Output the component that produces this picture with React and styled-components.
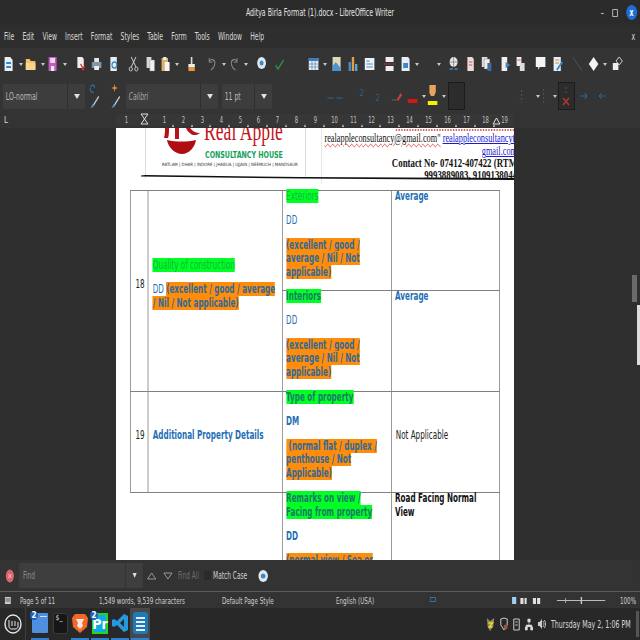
import React from "react";
import styled, { createGlobalStyle, css } from "styled-components";

const GlobalStyle = createGlobalStyle`
  html, body { margin: 0; padding: 0; background: #2e2e2e; }
  * { box-sizing: border-box; }
`;

const UI = `"DejaVu Sans Condensed", "DejaVu Sans", sans-serif`;

// the screenshot was squeezed sideways, so text rows are laid out wide and narrowed
const SQUEEZE = 0.68;
const wide = (px) => px / SQUEEZE;

const squeezed = css`
  transform: scaleX(${SQUEEZE});
  transform-origin: left top;
`;

const squeezedRow = css`
  width: ${wide(640)}px;
  ${squeezed}
`;

const Window = styled.div`
  width: 640px;
  height: 640px;
  display: flex;
  flex-direction: column;
  overflow: hidden;
  font-family: ${UI};
  color: #d6d6d6;
  background: #2e2e2e;
`;

const TitleBar = styled.div`
  ${squeezedRow}
  height: 25px;
  flex: none;
  display: grid;
  grid-template-columns: 1fr auto 1fr;
  align-items: center;
  background: #2b2b2b;
  font-size: 10.2px;
  color: #e4e4e4;
`;

const TitleText = styled.span`
  grid-column: 2;
`;

const WindowButtons = styled.div`
  grid-column: 3;
  display: flex;
  justify-content: flex-end;
  align-items: center;
  gap: ${wide(8)}px;
  padding-right: ${wide(3)}px;
`;

const CloseDot = styled.div`
  width: ${wide(11)}px;
  height: 15px;
  border-radius: 50%;
  background: #1b6fd6;
  color: #fff;
  font-size: 10px;
  font-weight: 700;
  display: flex;
  align-items: center;
  justify-content: center;
`;

const MenuBar = styled.div`
  ${squeezedRow}
  height: 23px;
  flex: none;
  display: flex;
  align-items: center;
  gap: ${wide(8.2)}px;
  padding: 0 ${wide(5)}px 0 ${wide(4)}px;
  background: #2e2e2e;
  font-size: 10px;
  color: #d9d9d9;
`;

const MenuClose = styled.span`
  margin-left: auto;
  color: #ddd;
`;

const Bar = styled.div`
  height: 32px;
  display: flex;
  align-items: center;
  background: #343434;
  flex: none;
`;

const Tool = styled.div`
  flex: none;
  width: ${(p) => p.$w}px;
  margin-left: ${(p) => p.$ml}px;
  display: flex;
  align-items: center;
  justify-content: center;
`;

const Arrow = styled.div`
  width: 0;
  height: 0;
  border-left: 2px solid transparent;
  border-right: 2px solid transparent;
  border-top: 3px solid #c9c9c9;
`;

const Combo = styled.div`
  flex: none;
  width: ${(p) => p.$w}px;
  height: 25px;
  margin-left: ${(p) => p.$ml}px;
  display: flex;
  align-items: center;
  background: #3d3d3d;
  border-radius: 2px;
  font-size: 10px;
  color: ${(p) => p.$color || "#bcbcbc"};
  font-style: ${(p) => (p.$italic ? "italic" : "normal")};
`;

const ComboText = styled.span`
  flex: 1;
  padding-left: 4px;
  white-space: nowrap;
  ${squeezed}
`;

const ComboButton = styled.div`
  width: 18px;
  height: 100%;
  border-left: 1px solid #2f2f2f;
  display: flex;
  align-items: center;
  justify-content: center;
`;

const BigArrow = styled(Arrow)`
  border-left-width: 3px;
  border-right-width: 3px;
  border-top-width: 5px;
  border-top-color: #e0e0e0;
`;

const DarkBox = styled.div`
  flex: none;
  width: ${(p) => p.$w}px;
  height: 28px;
  margin-left: ${(p) => p.$ml}px;
  background: #2c2c2c;
  border: 1px solid #1c1c1c;
  display: flex;
  align-items: center;
  justify-content: center;
`;

const RulerBar = styled.div`
  height: 16px;
  flex: none;
  display: flex;
  align-items: center;
  background: #333;
`;

const TabCorner = styled.span`
  width: 116px;
  padding-left: 4px;
  font-size: 8px;
  color: #ddd;
`;

const Ruler = styled.div`
  position: relative;
  width: 398px;
  height: 12px;
  padding-left: 1px;
  display: flex;
  align-items: center;
  background: #373737;
  font-size: 8px;
  color: #c4c4c4;
`;

const RulerNum = styled.span`
  flex: none;
  width: 18.9px;
  text-align: center;
  position: relative;
  &::after {
    content: "";
    position: absolute;
    right: 0;
    bottom: -2px;
    border-left: 1.5px solid transparent;
    border-right: 1.5px solid transparent;
    border-bottom: 3px solid #ccc;
    display: ${(p) => (p.$tick ? "block" : "none")};
  }
`;

const RulerDigit = styled.span`
  display: inline-block;
  transform: scaleX(0.72);
`;

const RulerMark = styled.svg`
  position: absolute;
  top: -1px;
  left: ${(p) => p.$x}px;
`;

const DocArea = styled.div`
  flex: 1;
  min-height: 0;
  display: flex;
  padding-left: 116px;
  background: #2f2f2f;
`;

const Page = styled.div`
  position: relative;
  width: 398px;
  height: 100%;
  overflow: hidden;
  background: #fff;
`;

const PageHeader = styled.div`
  height: 62px;
  display: flex;
  overflow: hidden;
`;

const LogoCell = styled.div`
  flex: none;
  width: 161px;
  height: 50px;
  margin-left: 29px;
  padding-left: 16px;
  border-left: 1px solid #ddd;
  border-right: 1px solid #ddd;
`;

const LogoTop = styled.div`
  display: flex;
  height: 22px;
`;

const AppleMark = styled.svg`
  flex: none;
`;

const BrandName = styled.div`
  flex: none;
  font-family: "Liberation Serif", serif;
  font-size: 28px;
  line-height: 28px;
  color: #c0141c;
  margin-top: -11px;
  margin-left: 2px;
  transform: scaleX(0.63);
  transform-origin: left;
  white-space: nowrap;
`;

const BrandSub = styled.div`
  font-weight: 700;
  font-size: 9.4px;
  line-height: 10px;
  color: #12a25a;
  margin-left: 43px;
  white-space: nowrap;
  transform: scaleX(0.75);
  transform-origin: left;
`;

const BrandCities = styled.div`
  font-size: 4.4px;
  line-height: 7px;
  margin-top: 1px;
  color: #333;
  white-space: nowrap;
`;

const ContactCell = styled.div`
  flex: none;
  width: ${wide(196)}px;
  height: 56px;
  margin-left: 15px;
  padding-left: 4px;
  border-left: 1.5px solid #ddd;
  font-family: "Liberation Serif", serif;
  color: #111;
  text-align: right;
  ${squeezed}
`;

const Squiggle = styled.div`
  height: 3px;
  margin: 0 4px 0 105px;
  border-bottom: 2px dotted #d85a5a;
`;

const MailLine = styled.div`
  font-size: 12.2px;
  line-height: 13px;
  margin-top: 1px;
  white-space: nowrap;
  display: flex;
`;

const Typo = styled.span`
  text-decoration: underline wavy #d84040 1px;
`;

const DocLink = styled.a`
  color: #1a1ad0;
  text-decoration: underline;
`;

const LinkLine = styled.div`
  font-size: 12.2px;
  line-height: 12px;
`;

const ContactLine = styled.div`
  font-size: 13px;
  font-weight: 700;
  line-height: 12px;
  white-space: nowrap;
`;

const Swoosh = styled.svg`
  position: absolute;
  left: 25px;
  top: 46px;
`;

const Sheet = styled.table`
  margin-left: 14px;
  width: ${wide(369)}px;
  table-layout: fixed;
  border-collapse: collapse;
  font-size: 11.8px;
  line-height: 13.6px;
  ${squeezed}
`;

const LINE = "#6e6e6e";
const RULE = "#808080";

const Cell = styled.td`
  border-top: 1px solid ${RULE};
  border-bottom: ${(p) => (p.$open ? "none" : `1px solid ${RULE}`)};
  border-left: ${(p) => (p.$open ? "none" : `1.5px solid ${LINE}`)};
  border-right: ${(p) => (p.$open ? "none" : `1.5px solid ${LINE}`)};
  padding: ${(p) => (p.$mid ? "0 4px 13px 6px" : "0 4px 0 5px")};
  vertical-align: ${(p) => (p.$mid ? "middle" : "top")};
  height: ${(p) => p.$h || "auto"};
  color: ${(p) => p.$color || "#222"};
  font-weight: ${(p) => (p.$bold ? 700 : 400)};
  text-align: ${(p) => (p.$center ? "center" : "left")};
  & > p:first-child {
    margin-top: ${(p) => (p.$mid ? 0 : -1)}px;
  }
`;

const Para = styled.p`
  margin: 0 0 ${(p) => (p.$last ? 0 : 10.8)}px;
  color: ${(p) => p.$color || "#1f6fb5"};
  font-weight: ${(p) => (p.$bold ? 700 : 400)};
`;

const Green = styled.span`
  background: #00ff22;
  color: ${(p) => p.$color || "#0f7d5e"};
  font-weight: ${(p) => (p.$bold ? 700 : 400)};
`;

const Orange = styled.span`
  background: #ff8c0a;
  color: #2f6a9a;
  font-weight: 700;
`;

const Rail = styled.div`
  position: relative;
  margin-left: auto;
  width: 10px;
  height: 100%;
`;

const Thumb = styled.div`
  position: absolute;
  left: 2px;
  top: 147px;
  width: 5px;
  height: 27px;
  background: #6a6a6a;
`;

const Handle = styled.div`
  position: absolute;
  right: 0;
  top: 177px;
  width: 3px;
  height: 60px;
  background: #dcdcdc;
`;

const FindBar = styled.div`
  ${squeezedRow}
  height: 32px;
  flex: none;
  display: flex;
  align-items: center;
  background: #333;
  border-bottom: 1px solid #5c5c5c;
  font-size: 9.6px;
`;

const FindInput = styled.div`
  flex: none;
  width: ${wide(124)}px;
  height: 25px;
  margin-left: ${wide(2)}px;
  display: flex;
  align-items: center;
  background: #3e3e3e;
  color: #8c8c8c;
`;

const FindText = styled.span`
  flex: 1;
  padding-left: 6px;
`;

const FindDrop = styled(ComboButton)`
  width: ${wide(18)}px;
`;

const FindLabel = styled.span`
  margin-left: ${(p) => wide(p.$ml)}px;
  color: ${(p) => p.$color};
  white-space: nowrap;
`;

const Check = styled.div`
  flex: none;
  width: ${wide(7)}px;
  height: 9px;
  margin-left: ${wide(5)}px;
  background: #2a2a2a;
`;

const StatusBar = styled.div`
  ${squeezedRow}
  height: 16px;
  flex: none;
  display: flex;
  align-items: center;
  background: #333;
  font-size: 9.2px;
  color: #cfcfcf;
`;

const StatusItem = styled.span`
  flex: none;
  width: ${(p) => wide(p.$w)}px;
  margin-left: ${(p) => wide(p.$ml || 0)}px;
  white-space: nowrap;
`;

const Slider = styled.div`
  position: relative;
  flex: none;
  width: ${wide(48)}px;
  height: 1px;
  margin-left: ${wide(13)}px;
  background: #bbb;
  &::before, &::after {
    content: "";
    position: absolute;
    top: -3px;
    width: 1.5px;
    height: 7px;
    background: #ccc;
  }
  &::before { left: ${wide(8)}px; height: 5px; top: -2px; }
  &::after { left: ${wide(24)}px; }
`;

const Taskbar = styled.div`
  height: 32px;
  flex: none;
  display: flex;
  align-items: center;
  background: #282828;
  position: relative;
`;

const MintSlot = styled.div`
  width: 26px;
  height: 100%;
  display: flex;
  align-items: center;
  justify-content: center;
  border-right: 1px solid #3c3c3c;
`;

const AppList = styled.div`
  display: flex;
  height: 100%;
  margin-left: 4px;
`;

const AppSlot = styled.div`
  position: relative;
  width: 20px;
  height: 100%;
  display: flex;
  align-items: center;
  justify-content: center;
  background: ${(p) => (p.$active ? "#484848" : "transparent")};
  padding-bottom: 2px;
  &::after {
    content: "";
    position: absolute;
    left: 1px;
    right: 1px;
    bottom: 0;
    height: 2px;
    background: ${(p) => (p.$running ? "#2f7fd0" : "transparent")};
  }
`;

const Badge = styled.span`
  position: absolute;
  top: 3px;
  left: 0;
  width: 8px;
  height: 9px;
  border-radius: 50%;
  background: #1c5fc4;
  color: #fff;
  font-size: 8px;
  font-weight: 700;
  line-height: 9px;
  text-align: center;
  z-index: 1;
`;

const Folder = styled.div`
  width: 16px;
  height: 20px;
  background: #4f8fe0;
  border-radius: 1px;
  position: relative;
  &::before {
    content: "";
    position: absolute;
    left: 8px;
    top: 3px;
    width: 7px;
    height: 1px;
    background: #cfe1f8;
  }
`;

const Terminal = styled.div`
  width: 15px;
  height: 21px;
  border-radius: 3px;
  background: #161616;
  border: 1px solid #3a3a3a;
  color: #ddd;
  font-size: 7px;
  padding: 1px 0 0 2px;
  line-height: 7px;
`;

const Premiere = styled.div`
  width: 16px;
  height: 21px;
  background: #12a8e8;
  border: 2px solid #22d622;
  color: #fff;
  font-size: 14px;
  font-weight: 700;
  display: flex;
  align-items: flex-end;
  justify-content: center;
  line-height: 15px;
`;

const WriterTile = styled.div`
  width: 15px;
  height: 22px;
  border-radius: 3px;
  background: #1f78b8;
  padding: 5px 3px 0;
  display: flex;
  flex-direction: column;
  gap: 2px;
`;

const WriterLine = styled.i`
  display: block;
  height: 2px;
  background: #e4eef6;
`;

const Tray = styled.div`
  margin-left: auto;
  display: flex;
  align-items: center;
  gap: 5px;
  padding-right: 10px;
  font-size: 10.3px;
  color: #d8d8d8;
`;

const Clock = styled.span`
  margin-right: -38px;
  white-space: nowrap;
  ${squeezed}
`;

const Grip = styled.div`
  position: absolute;
  right: 1px;
  top: 3px;
  width: 3px;
  height: 26px;
  background: #555;
`;

// pictures are drawn on a 14 wide box and narrowed like everything else on the screenshot
const S = ({ w = 14, h = 16, children }) => (
  <svg width={w * 0.8} height={h} viewBox={`0 0 ${w} ${h}`} preserveAspectRatio="none">{children}</svg>
);

const icons = {
  doc: <S><path d="M2 1h7l3 3v11H2z" fill="#e9f1f8" /><path d="M4 6h6v2H4zM4 10h6v2H4z" fill="#2f86d0" /></S>,
  folder: <S><path d="M1 3h5l1 2h6v9H1z" fill="#f4c267" /><path d="M1 7h12v7H1z" fill="#f9d68a" /></S>,
  save: <S><path d="M2 1h10v14H2z" fill="#c45cc0" /><path d="M4 2h6v5H4z" fill="#f1d4ef" /><path d="M5 10h4v5H5z" fill="#eee" /></S>,
  pdf: <S><path d="M3 1h6l2 2v9H3z" fill="#eee" /><path d="M7 8l4 6M9 14l3-4" stroke="#d23030" strokeWidth="1.5" fill="none" /></S>,
  print: <S><path d="M4 2h6v4H4z" fill="#e6e6e6" /><path d="M1 6h12v6H1z" fill="#7f97aa" /><path d="M4 10h6v4H4z" fill="#eee" /></S>,
  preview: <S><path d="M3 1h8v14H3z" fill="#e8eef3" /><circle cx="8" cy="9" r="3" fill="none" stroke="#3a83bd" strokeWidth="1.4" /></S>,
  cut: <S><path d="M4 1l6 10M10 1L4 11" stroke="#d0d0d0" strokeWidth="1.1" /><circle cx="3.5" cy="13" r="2" fill="none" stroke="#d0d0d0" /><circle cx="10.5" cy="13" r="2" fill="none" stroke="#d0d0d0" /></S>,
  copy: <S><path d="M2 1h6v11H2z" fill="#d8d8d8" /><path d="M6 4h6v11H6z" fill="#f0f0f0" stroke="#777" strokeWidth=".4" /></S>,
  paste: <S><path d="M2 2h8v13H2z" fill="#d9b36c" /><path d="M6 6h6v9H6z" fill="#f5f5f5" /><path d="M4 1h4v3H4z" fill="#eee" /></S>,
  brush: <S><path d="M6 1h2v7H6z" fill="#ddd" /><path d="M3 8h8v3H3z" fill="#f0f0f0" /><path d="M3 11h8v4H3z" fill="#e59a3e" /></S>,
  undo: <S><path d="M4 5c3-3 8-1 7 3-.5 3-3 5-5 6M4 2v4h4" fill="none" stroke="#8d8d8d" strokeWidth="1.1" /></S>,
  redo: <S><path d="M10 5C7 2 2 4 3 8c.5 3 3 5 5 6M10 2v4H6" fill="none" stroke="#8d8d8d" strokeWidth="1.1" /></S>,
  nav: <S><ellipse cx="7" cy="7" rx="5.5" ry="6" fill="#dfe9f2" /><circle cx="7" cy="7" r="2.5" fill="#3d86c8" /></S>,
  tick: <S><path d="M2 9l3 4 7-9" fill="none" stroke="#2e8b45" strokeWidth="1.8" /></S>,
  table: <S><path d="M1 2h12v12H1z" fill="#e8eef4" /><path d="M1 2h12v3H1z" fill="#3a7fc0" /><path d="M1 8h12M1 11h12M5 2v12M9 2v12" stroke="#4b7ea8" strokeWidth=".7" /></S>,
  image: <S><path d="M2 1h10v14H2z" fill="#e4d8b4" /><path d="M2 10l4-4 6 6v3H2z" fill="#4a96d2" /></S>,
  chart: <S><path d="M2 6h3v9H2z" fill="#3f8fd0" /><path d="M6 1h3v14H6z" fill="#e3a040" /><path d="M10 8h3v7h-3z" fill="#5ea3d8" /></S>,
  text: <S><path d="M1 2h12v12H1z" fill="#eef2f5" /><path d="M3 5h4M3 8h8M3 11h8" stroke="#3a7fc0" /></S>,
  pagebreak: <S><path d="M2 1h10v5H2zM2 10h10v5H2z" fill="#eee" /><path d="M0 8h14" stroke="#b33" /></S>,
  field: <S><path d="M2 1h8l2 2v12H2z" fill="#e8eef4" /><path d="M4 7h6v5H4z" fill="#3d86c8" /></S>,
  link: <S><circle cx="7" cy="6" r="5" fill="#e6e6e6" /><path d="M2 6h10M7 1v10" stroke="#555" strokeWidth=".6" /><path d="M2 13h4M8 13h4" stroke="#3d86c8" strokeWidth="1.6" /></S>,
  note: <S><path d="M3 1h6l2 2v12H3z" fill="#efd8d8" /><path d="M5 6h4M5 9h4" stroke="#a55" /></S>,
  endnote: <S><path d="M1 1h7v10H1z" fill="#ddd" /><path d="M4 3h7v10H4z" fill="#eee" stroke="#666" strokeWidth=".4" /><path d="M8 7h5v8H8z" fill="#3d6f99" /></S>,
  bookmark: <S><path d="M2 1h7v14H2z" fill="#f0f0f0" /><path d="M7 6l6 3-6 3z" fill="#3d86c8" /></S>,
  xref: <S><path d="M2 1h6v9H2z" fill="#eee" /><path d="M6 7h6v8H6z" fill="#ddd" /><path d="M3 4h4" stroke="#c44" /></S>,
  comment: <S><path d="M1 1h12v10H6l-2 3v-3H1z" fill="#f4f4f4" /></S>,
  track: <S><path d="M2 1h9v14H2z" fill="#e8eef4" /><path d="M4 4h5M4 7h5" stroke="#c78a3a" /><path d="M6 14l7-8" stroke="#3d86c8" strokeWidth="2" /></S>,
  line: <S><path d="M1 1l12 14" stroke="#3f566a" strokeWidth="1.1" /></S>,
  shape: <S><path d="M7 1l6 7-6 7-6-7z" fill="#f4f4f4" /></S>,
  shapes: <S><path d="M9 1l4 4-4 4-4-4z" fill="none" stroke="#ddd" /><path d="M1 7h7v7H1z" fill="#eee" /></S>,
  paintA: <S w={16} h={26}><path d="M3 4c2-3 6-2 5 1M3 5c-1 3 1 5 4 4" fill="none" stroke="#2f6f9e" strokeWidth="1.4" /><path d="M4 25l2-3 7-9 1 1-7 9z" fill="#d8d8d8" /><path d="M3 25l3-4 2 2z" fill="#3a95d8" /></S>,
  paintB: <S w={16} h={26}><path d="M7 1l1 3 3 1-3 1-1 3-1-3-3-1 3-1z" fill="#d98a3a" /><path d="M4 25l2-3 7-9 1 1-7 9z" fill="#d8d8d8" /><path d="M3 25l3-4 2 2z" fill="#3a95d8" /></S>,
  dash: <S><path d="M3 10h8" stroke="#2f5f82" strokeWidth="1.2" /></S>,
  two: <S><text x="3" y="8" fontSize="9" fill="#2f5f82" fontFamily="DejaVu Sans">2</text></S>,
  twoLow: <S><text x="3" y="13" fontSize="9" fill="#2f5f82" fontFamily="DejaVu Sans">2</text></S>,
  pen: <S w={16}><path d="M1 12h6" stroke="#2f6f5a" strokeWidth="1.2" /><path d="M7 12l5-7 2 2-5 6z" fill="#d83a3a" /></S>,
  redBar: <S><path d="M1 11h12v4H1z" fill="#d01818" /></S>,
  marker: <S w={14} h={26}><path d="M3 2h8v7l-2 4H5l-2-3z" fill="#e8a45a" /><path d="M1 18h12v4H1z" fill="#f4f000" /></S>,
  dots: <S><path d="M7 2v2M7 6v2M7 10v2" stroke="#2f5f82" strokeWidth="1.4" /><path d="M2 14h10" stroke="#2f5f82" strokeDasharray="1 2" /></S>,
  bars: <S><path d="M7 1v14" stroke="#2f5f82" strokeDasharray="2 2" /></S>,
  right: <S><path d="M2 8h8M7 5l3 3-3 3" stroke="#2f6f9e" fill="none" /></S>,
  left: <S><path d="M12 8H4M7 5L4 8l3 3" stroke="#2f6f9e" fill="none" /></S>,
};

// x centre of each thing on the toolbar, taken from the screen
const mainTools = [
  ["doc", 9], ["a", 21], ["folder", 31], ["a", 43], ["save", 53], ["a", 65], ["pdf", 81],
  ["print", 97], ["preview", 114], ["cut", 134], ["copy", 151], ["paste", 166], ["a", 177],
  ["brush", 192], ["undo", 212], ["a", 224], ["redo", 235], ["a", 246], ["nav", 262], ["tick", 280],
  ["table", 314], ["a", 325], ["image", 337], ["chart", 353], ["text", 370], ["pagebreak", 390],
  ["field", 406], ["a", 417], ["a", 439], ["link", 454], ["note", 471], ["endnote", 487],
  ["bookmark", 506], ["xref", 521], ["comment", 541], ["track", 558], ["line", 578],
  ["shape", 594], ["a", 605], ["shapes", 618],
];

const placeTools = (list, start = 0) => {
  let end = start;
  return list.map(([kind, x]) => {
    const w = kind === "a" ? 5 : 14;
    const ml = x - w / 2 - end;
    end = x + w / 2;
    return { kind, w, ml };
  });
};

const ToolRun = ({ list, start }) =>
  placeTools(list, start).map((t, i) => (
    <Tool key={i} $w={t.w} $ml={t.ml}>
      {t.kind === "a" ? <Arrow /> : icons[t.kind]}
    </Tool>
  ));

const rulerNums = [1, null, 1, 2, 3, 4, 5, 6, 7, 8, 9, 10, 11, 12, 13, 14, 15, 16, 17, 18, 19];

const App = () => (
  <Window>
    <GlobalStyle />
    <TitleBar>
      <TitleText>Aditya Birla Format (1).docx - LibreOffice Writer</TitleText>
      <WindowButtons>
        <span>–</span>
        <svg width="9" height="10" viewBox="0 0 9 10"><path d="M1 1.500h7v7H1z" fill="none" stroke="#ccc" /></svg>
        <CloseDot>x</CloseDot>
      </WindowButtons>
    </TitleBar>

    <MenuBar>
      {["File", "Edit", "View", "Insert", "Format", "Styles", "Table", "Form", "Tools", "Window", "Help"].map((m) => (
        <span key={m}>{m}</span>
      ))}
      <MenuClose>x</MenuClose>
    </MenuBar>

    <Bar>
      <ToolRun list={mainTools} />
    </Bar>

    <Bar>
      <Combo $w={82} $ml={3}>
        <ComboText>LO-normal</ComboText>
        <ComboButton><BigArrow /></ComboButton>
      </Combo>
      <Tool $w={16} $ml={1}>{icons.paintA}</Tool>
      <Tool $w={16} $ml={5}>{icons.paintB}</Tool>
      <Combo $w={92} $ml={3} $italic $color="#a8a8a8">
        <ComboText>Calibri</ComboText>
        <ComboButton><BigArrow /></ComboButton>
      </Combo>
      <Combo $w={50} $ml={4}>
        <ComboText>11 pt</ComboText>
        <ComboButton><BigArrow /></ComboButton>
      </Combo>
      <ToolRun
        start={270}
        list={[["dash", 329], ["dash", 338], ["two", 361], ["twoLow", 377]]}
      />
      <Tool $w={16} $ml={3}>{icons.pen}</Tool>
      <Tool $w={14} $ml={1}>{icons.redBar}</Tool>
      <Tool $w={5} $ml={1}><Arrow /></Tool>
      <Tool $w={14} $ml={0}>{icons.marker}</Tool>
      <Tool $w={5} $ml={1}><Arrow /></Tool>
      <DarkBox $w={17} $ml={2} />
      <Tool $w={14} $ml={50}>{icons.dots}</Tool>
      <Tool $w={5} $ml={6}><Arrow /></Tool>
      <Tool $w={14} $ml={-3}>{icons.bars}</Tool>
      <Tool $w={5} $ml={1}><Arrow /></Tool>
      <DarkBox $w={17} $ml={1}>
        <svg width="12" height="22" viewBox="0 0 12 22">
          <path d="M5 2v6" stroke="#2f5f82" strokeDasharray="2 2" />
          <path d="M2 13l6 7M8 13l-6 7" stroke="#c0392b" strokeWidth="1.2" />
        </svg>
      </DarkBox>
      <Tool $w={14} $ml={3}>{icons.right}</Tool>
      <Tool $w={14} $ml={3}>{icons.left}</Tool>
    </Bar>

    <RulerBar>
      <TabCorner>L</TabCorner>
      <Ruler>
        {rulerNums.map((n, i) => (
          <RulerNum key={i} $tick={i > 1 && i < 20}><RulerDigit>{n}</RulerDigit></RulerNum>
        ))}
        <RulerMark $x={24} width="9" height="12" viewBox="0 0 9 12">
          <path d="M1 1h7L4.5 6 8 11H1l3.500-5z" fill="#3a3a3a" stroke="#ddd" />
        </RulerMark>
        <RulerMark $x={376} width="9" height="12" viewBox="0 0 9 12">
          <path d="M4.500 5L8 11H1z" fill="#3a3a3a" stroke="#ddd" />
        </RulerMark>
      </Ruler>
    </RulerBar>

    <DocArea>
      <Page>
        <PageHeader>
          <LogoCell>
            <LogoTop>
              <AppleMark width="40" height="27" viewBox="0 0 40 27">
                <path d="M3 0h4c0 4 0 7-1 10H2C3 6 3 3 3 0zM13 0h4v11h-4zM24 0h4c2 3 6 5 10 5-2 2-7 3-9 1-2-2-4-3-5-6z" fill="#b5121b" />
                <path d="M5 12c9 2 20 2 29 0-1 7-7 14-14 14S6 19 5 12z" fill="#b00d12" />
              </AppleMark>
              <BrandName>Real Apple</BrandName>
            </LogoTop>
            <BrandSub>CONSULTANCY HOUSE</BrandSub>
            <BrandCities>RATLAM | DHAR | INDORE | JHABUA | UJJAIN | NEEMUCH | MANDSAUR</BrandCities>
          </LogoCell>
          <ContactCell>
            <Squiggle />
            <MailLine>
              <Typo>realappleconsultancy@gmail.com"</Typo>&nbsp;<DocLink>realappleconsultancyt</DocLink>
            </MailLine>
            <LinkLine><DocLink>gmail.com</DocLink></LinkLine>
            <ContactLine>Contact No- 07412-407422 (RTM</ContactLine>
            <ContactLine>9993889083, 9109138044</ContactLine>
          </ContactCell>
        </PageHeader>
        <Swoosh width="373" height="8" viewBox="0 0 373 8">
          <path d="M0 1.500L4 1 160 3 373 4v2L160 4.500 0 2.500z" fill="#111" />
        </Swoosh>

        <Sheet>
          <colgroup>
            <col style={{ width: wide(18) }} />
            <col style={{ width: wide(134) }} />
            <col style={{ width: wide(109) }} />
            <col style={{ width: wide(108) }} />
          </colgroup>
          <tbody>
            <tr>
              <Cell rowSpan={2} $center $mid>18</Cell>
              <Cell rowSpan={2} $mid>
                <Para><Green $color="#12b548">Quality of construction</Green></Para>
                <Para $last>DD <Orange>(excellent / good / average<br />/ Nil / Not applicable)</Orange></Para>
              </Cell>
              <Cell $h="100px">
                <Para><Green $color="#12b548">Exteriors</Green></Para>
                <Para>DD</Para>
                <Para $last><Orange>(excellent / good /<br />average / Nil / Not<br />applicable)</Orange></Para>
              </Cell>
              <Cell><Para $bold $last>Average</Para></Cell>
            </tr>
            <tr>
              <Cell $h="101px">
                <Para><Green $bold $color="#1c7a6a">Interiors</Green></Para>
                <Para>DD</Para>
                <Para $last><Orange>(excellent / good /<br />average / Nil / Not<br />applicable)</Orange></Para>
              </Cell>
              <Cell><Para $bold $last>Average</Para></Cell>
            </tr>
            <tr>
              <Cell $center $mid>19</Cell>
              <Cell $mid $bold $color="#1f6fb5">Additional Property Details</Cell>
              <Cell $h="101px">
                <Para><Green $bold $color="#1c7a6a">Type of property</Green></Para>
                <Para $bold>DM</Para>
                <Para $last><Orange>&nbsp;(normal flat / duplex /<br />penthouse / Not<br />Applicable)</Orange></Para>
              </Cell>
              <Cell $mid>Not Applicable</Cell>
            </tr>
            <tr>
              <Cell $open />
              <Cell $open />
              <Cell $h="110px">
                <Para><Green $bold $color="#1c7a6a">Remarks on view /<br />Facing from property</Green></Para>
                <Para $bold>DD</Para>
                <Para $last><Orange>(normal view / Sea or</Orange></Para>
              </Cell>
              <Cell><Para $bold $last $color="#111">Road Facing Normal<br />View</Para></Cell>
            </tr>
          </tbody>
        </Sheet>
      </Page>
      <Rail>
        <Thumb />
        <Handle />
      </Rail>
    </DocArea>

    <FindBar>
      <Tool $w={wide(14)} $ml={wide(3)}>
        <svg width="13" height="14" viewBox="0 0 13 14">
          <ellipse cx="6.500" cy="7" rx="6" ry="6.500" fill="#d9646a" />
          <path d="M4 5l5 4M9 5L4 9" stroke="#f3d8d8" />
        </svg>
      </Tool>
      <FindInput>
        <FindText>Find</FindText>
        <FindDrop><BigArrow /></FindDrop>
      </FindInput>
      <Tool $w={wide(12)} $ml={wide(3)}>
        <svg width="14" height="8" viewBox="0 0 14 8"><path d="M7 1l6 6H1z" fill="none" stroke="#aaa" /></svg>
      </Tool>
      <Tool $w={wide(12)} $ml={wide(4)}>
        <svg width="14" height="8" viewBox="0 0 14 8"><path d="M7 7l6-6H1z" fill="none" stroke="#aaa" /></svg>
      </Tool>
      <FindLabel $ml={4} $color="#6e6e6e">Find All</FindLabel>
      <Check />
      <FindLabel $ml={2} $color="#cfcfcf">Match Case</FindLabel>
      <Tool $w={wide(12)} $ml={wide(10)}>
        <svg width="16" height="14" viewBox="0 0 16 14">
          <ellipse cx="8" cy="7" rx="7" ry="6" fill="#dfe9f2" />
          <ellipse cx="8" cy="7" rx="3.500" ry="2.500" fill="#3d86c8" />
        </svg>
      </Tool>
    </FindBar>

    <StatusBar>
      <Tool $w={wide(10)} $ml={wide(3)}>
        <svg width="9" height="7" viewBox="0 0 9 7"><path d="M0 0h9v7H0z" fill="#ccc" /><path d="M1 2h7M1 4h7" stroke="#444" /></svg>
      </Tool>
      <StatusItem $w={79} $ml={7}>Page 5 of 11</StatusItem>
      <StatusItem $w={123}>1,549 words, 9,539 characters</StatusItem>
      <StatusItem $w={114}>Default Page Style</StatusItem>
      <StatusItem $w={93}>English (USA)</StatusItem>
      <Tool $w={wide(8)} $ml={0}>
        <svg width="9" height="6" viewBox="0 0 9 6"><path d="M.5.500h8v4h-8z" fill="none" stroke="#3d7fae" /></svg>
      </Tool>
      <Tool $w={wide(32)} $ml={wide(75)}>
        <svg width="46" height="9" viewBox="0 0 30 9" preserveAspectRatio="none">
          <path d="M0 1h4v7H0z" fill="#9fd0f0" />
          <path d="M8 2h3v6H8zM12 2h2v6h-2zM20 2h3v6h-3zM24 2h3v6h-3z" fill="#e0e0e0" />
        </svg>
      </Tool>
      <Slider />
      <StatusItem $w={20} $ml={15}>100%</StatusItem>
    </StatusBar>

    <Taskbar>
      <MintSlot>
        <svg width="18" height="20" viewBox="0 0 18 20">
          <ellipse cx="9" cy="10" rx="8" ry="9" fill="none" stroke="#e6e6e6" strokeWidth="1.4" />
          <path d="M5 6v6c0 2 1 3 3 3h3c2 0 3-1 3-3V8M8 12V7M11 12V7" fill="none" stroke="#e6e6e6" />
        </svg>
      </MintSlot>
      <AppList>
        <AppSlot $running><Badge>2</Badge><Folder /></AppSlot>
        <AppSlot><Terminal>$_</Terminal></AppSlot>
        <AppSlot $running>
          <svg width="16" height="20" viewBox="0 0 16 20">
            <path d="M3 1h10l3 4-1 9-7 6-7-6-1-9z" fill="#f0692a" />
            <path d="M4 6h8l-2 4 1 3-3 3-3-3 1-3z" fill="#f8e4d8" />
          </svg>
        </AppSlot>
        <AppSlot $running><Badge>2</Badge><Premiere>Pr</Premiere></AppSlot>
        <AppSlot $running>
          <svg width="16" height="18" viewBox="0 0 16 18">
            <path d="M12 0l4 2v14l-4 2-7-7-3 2-2-1V6l2-1 3 2zM12 5L8 9l4 4z" fill="#2499e0" fillRule="evenodd" />
          </svg>
        </AppSlot>
        <AppSlot $running $active>
          <WriterTile><WriterLine /><WriterLine /><WriterLine /><WriterLine /></WriterTile>
        </AppSlot>
      </AppList>
      <Tray>
        <svg width="9" height="15" viewBox="0 0 11 15" preserveAspectRatio="none">
          <path d="M1 1l4 3 5-3-1 8-4 5-3-4z" fill="#8a8a6a" />
          <path d="M3 6h5L4 10h4" fill="none" stroke="#f4d820" strokeWidth="1.5" />
        </svg>
        <svg width="8" height="14" viewBox="0 0 10 14" preserveAspectRatio="none">
          <path d="M1 2l4-1 4 1v6l-4 5-4-5z" fill="none" stroke="#ddd" />
          <circle cx="7" cy="10" r="2.500" fill="#9a5a3a" />
        </svg>
        <svg width="7" height="13" viewBox="0 0 9 13" preserveAspectRatio="none"><path d="M1 1h7v11H1z" fill="none" stroke="#ddd" /><path d="M3 4h3M3 7h3" stroke="#ddd" /></svg>
        <svg width="8" height="13" viewBox="0 0 10 13" preserveAspectRatio="none"><path d="M3.500 1h3v3h-3zM0 9h3v3H0zM7 9h3v3H7zM5 4v3M1.500 9V7h7v2" fill="#ddd" stroke="#ddd" strokeWidth=".6" /></svg>
        <svg width="8" height="12" viewBox="0 0 10 12" preserveAspectRatio="none"><path d="M0 4h2l3-3v10L2 8H0z" fill="#ccc" /><path d="M6 3c2 2 2 4 0 6M8 2c2 3 2 5 0 8" fill="none" stroke="#ccc" /></svg>
        <Clock>Thursday May 2, 1:06 PM</Clock>
      </Tray>
      <Grip />
    </Taskbar>
  </Window>
);

export default App;
